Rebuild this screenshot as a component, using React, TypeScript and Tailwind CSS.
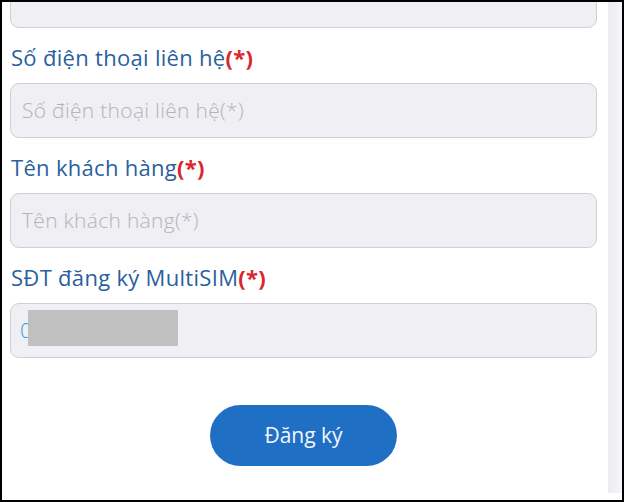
import React from "react";

const font = { fontFamily: "'Open Sans', Roboto, sans-serif" };

function Label({ text }: { text: string }) {
  return (
    <div className="flex h-[55px] items-center pl-[1px] pt-[3px]">
      <span className="text-[22px] leading-none tracking-[0.3px] text-[#2b5f9e]">
        {text}
        <span className="font-bold text-[#d9262e]">(*)</span>
      </span>
    </div>
  );
}

function Field({ placeholder }: { placeholder?: string }) {
  return (
    <div className="flex h-[55px] items-center rounded-[9px] border border-[#cfcfd4] bg-[#efeff4] px-[11px]">
      {placeholder && (
        <span className="text-[21px] font-light leading-none tracking-[0.3px] text-[#b4b4b9]">
          {placeholder}
        </span>
      )}
    </div>
  );
}

export default function App() {
  return (
    <div
      className="flex h-[502px] w-[624px] overflow-hidden border-2 border-black bg-white"
      style={font}
    >
      <main className="flex flex-1 flex-col pl-[8px] pr-[11px]">
        <div className="-mt-[29px]">
          <Field />
        </div>
        <Label text="Số điện thoại liên hệ" />
        <Field placeholder="Số điện thoại liên hệ(*)" />
        <Label text="Tên khách hàng" />
        <Field placeholder="Tên khách hàng(*)" />
        <Label text="SĐT đăng ký MultiSIM" />
        <div className="relative">
          <div className="flex h-[55px] items-center rounded-[9px] border border-[#cfcfd4] bg-[#efeff4] pl-[9px]">
            <span className="text-[21px] font-light leading-none text-[#2aa3da]">0</span>
          </div>
          <div className="absolute left-[18px] top-[7px] h-[36px] w-[150px] bg-[#c0c0c0]" />
        </div>
        <div className="flex justify-center pt-[47px]">
          <button className="flex h-[61px] w-[187px] items-center justify-center rounded-full bg-[#1f6fc4] text-[21px] text-[#f2f6fb]">
            Đăng ký
          </button>
        </div>
      </main>
      <div className="flex w-[14px] flex-col">
        <div className="h-[491px] bg-gradient-to-r from-[#ececf1] to-[#f6f6f9]" />
      </div>
    </div>
  );
}
